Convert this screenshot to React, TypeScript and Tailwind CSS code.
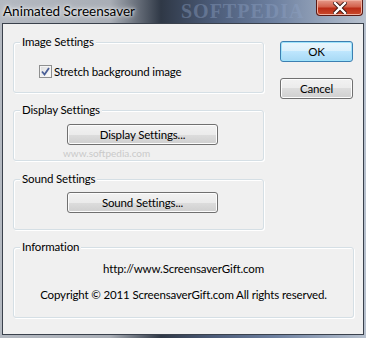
import React from 'react'

const font = { fontFamily: 'Lato, "Noto Sans", sans-serif' }

function Btn({ label, primary = false, className = '' }: { label: string; primary?: boolean; className?: string }) {
  return (
    <button
      className={
        'h-[21px] rounded-[3px] border text-[11.5px] tracking-[-0.15px] text-black leading-none flex items-center justify-center ' +
        (primary
          ? 'border-[#3c7fb1] bg-[linear-gradient(#eaf6fd_0%,#d9f0fc_50%,#bee6fd_50%,#a7d9f5_100%)] shadow-[inset_0_0_0_1px_#9fe3fb] '
          : 'border-[#707070] bg-[linear-gradient(#f2f2f2_0%,#ebebeb_50%,#dddddd_50%,#cfcfcf_100%)] shadow-[inset_0_0_0_1px_#fcfcfc] ') +
        className
      }
    >
      {label}
    </button>
  )
}

function Group({ title, className = '', children }: { title: string; className?: string; children?: React.ReactNode }) {
  return (
    <div className={'relative rounded-[3px] border border-[#d5dfe5] shadow-[inset_1px_1px_0_#ffffff,1px_1px_0_#ffffff] ' + className}>
      <span className="absolute left-[6px] -top-[9px] bg-[#f0f0f0] px-[2px] text-[11.5px] tracking-[-0.15px] leading-[16px] text-black">{title}</span>
      {children}
    </div>
  )
}

export default function App() {
  return (
    <div style={font} className="w-[366px] h-[338px] flex flex-col overflow-hidden bg-[linear-gradient(90deg,#b4b9c1_0%,#a9aeb6_30%,#2f3846_44%,#4b5b78_58%,#6d80a0_75%,#9aa8bd_90%,#b8c1ce_100%)]">
      {/* title bar */}
      <div className="h-[23px] flex items-start shrink-0">
        <span className="pl-[3px] pt-[3px] text-[13.5px] leading-[17px] text-black [text-shadow:0_0_6px_#ffffff,0_0_3px_#ffffff]">
          Animated Screensaver
        </span>
        <span className="ml-[46px] h-[23px] text-[20px] font-bold leading-[23px] tracking-[1px] text-[#8ea2c4] opacity-40 [font-family:'Liberation_Serif',serif]">
          SOFTPEDIA
        </span>
        <div className="ml-auto mr-[3px] w-[47px] h-[16px] rounded-b-[4px] border border-t-0 border-[#5a1a14] bg-[linear-gradient(#e69a8a_0%,#d3624c_45%,#bb2c16_55%,#c94a2c_100%)] shadow-[inset_0_0_0_1px_#f0b0a0] flex items-center justify-center">
          <svg width="14" height="12" viewBox="0 0 14 12">
            <path d="M2 1 L12 11 M12 1 L2 11" stroke="#3a1410" strokeWidth="4.2" strokeLinecap="square" />
            <path d="M2 1 L12 11 M12 1 L2 11" stroke="#ffffff" strokeWidth="2.4" strokeLinecap="square" />
          </svg>
        </div>
      </div>

      {/* client area */}
      <div className="mx-[2px] mb-[3px] flex-1 border border-[#3a414c] bg-[#f0f0f0] flex flex-col">
        <div className="flex pt-[18px] pl-[10px]">
          <div className="w-[251px] flex flex-col">
            <Group title="Image Settings" className="h-[51px]">
              <div className="flex items-center pl-[25px] pt-[21px]">
                <span className="w-[13px] h-[13px] border border-[#8e8f8f] bg-[linear-gradient(135deg,#dcdcdc,#ffffff)] shadow-[inset_0_0_0_1px_#f4f4f4] flex items-center justify-center">
                  <svg width="9" height="9" viewBox="0 0 9 9">
                    <path d="M1 4.5 L3.5 7.5 L8 1" fill="none" stroke="#4a5f97" strokeWidth="1.8" />
                  </svg>
                </span>
                <span className="ml-[2px] text-[11.5px] tracking-[-0.15px] leading-[15px] text-black">Stretch background image</span>
              </div>
            </Group>
            <Group title="Display Settings" className="h-[51px] mt-[17px]">
              <Btn label="Display Settings..." className="w-[151px] ml-[53px] mt-[13px]" />
              <span className="absolute left-[49px] top-[37px] text-[10px] leading-none text-[#cacaca] pointer-events-none">www.softpedia.com</span>
            </Group>
            <Group title="Sound Settings" className="h-[51px] mt-[18px]">
              <Btn label="Sound Settings..." className="w-[151px] ml-[53px] mt-[12px]" />
            </Group>
          </div>
          <div className="ml-[16px] -mt-px flex flex-col">
            <Btn label="OK" primary className="w-[73px]" />
            <Btn label="Cancel" className="w-[73px] mt-[16px]" />
          </div>
        </div>

        <Group title="Information" className="ml-[10px] mt-[17px] w-[341px] h-[71px]">
          <div className="flex flex-col items-center pt-[13px] text-[11.5px] tracking-[-0.15px] leading-[16px] text-black">
            <span>http://www.ScreensaverGift.com</span>
            <span className="mt-[10px]">Copyright © 2011 ScreensaverGift.com All rights reserved.</span>
          </div>
        </Group>
      </div>
    </div>
  )
}
